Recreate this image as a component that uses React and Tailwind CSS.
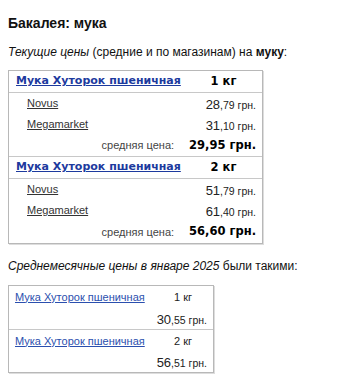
import React from "react";

function Price({ a, b }) {
  return (
    <span className="text-[#222] font-['Liberation_Sans',Arial,sans-serif]">
      <span className="text-[13px]">{a}</span>
      <span className="text-[10.5px]">{b}</span>
    </span>
  );
}

function Group({ weight, rows, avg, last }) {
  return (
    <div>
      <div className="flex h-[22px] items-center border-b border-[#c8c8c8]">
        <a href="#" className="pl-[7px] w-[176px] whitespace-nowrap text-[11px] font-bold text-[#1d3a9e] underline font-['DejaVu_Sans',Verdana,sans-serif]">
          Мука Хуторок пшеничная
        </a>
        <span className="flex-1 text-center text-[11.5px] font-bold text-black font-['DejaVu_Sans',Verdana,sans-serif]">
          {weight}
        </span>
      </div>
      {rows.map((r) => (
        <div key={r[0]} className="flex h-[21px] items-center justify-between pl-[18px] pr-[6px]">
          <a href="#" className="text-[11px] text-[#333] underline">{r[0]}</a>
          <Price a={r[1]} b={r[2]} />
        </div>
      ))}
      <div className={"flex h-[22px] items-center justify-end pr-[6px] " + (last ? "" : "border-b border-[#c8c8c8]")}>
        <span className="text-[11px] text-[#444] mr-[15px]">средняя цена:</span>
        <span className="text-[11.5px] font-bold text-black font-['DejaVu_Sans',Verdana,sans-serif]">{avg}</span>
      </div>
    </div>
  );
}

function Group2({ weight, price, last }) {
  return (
    <div className={last ? "" : "border-b border-[#c8c8c8]"}>
      <div className="flex h-[22px] items-center">
        <a href="#" className="pl-[6px] w-[144px] whitespace-nowrap text-[11px] text-[#2b4fae] underline">
          Мука Хуторок пшеничная
        </a>
        <span className="flex-1 text-center text-[11px] text-[#222]">{weight}</span>
      </div>
      <div className={"flex items-center justify-end pr-[6px] " + (last ? "h-[20px]" : "h-[21px]")}>
        <Price a={price[0]} b={price[1]} />
      </div>
    </div>
  );
}

export default function App() {
  return (
    <div className="bg-white w-[360px] h-[384px] px-[8px] pt-[15px] font-['Liberation_Sans',Arial,sans-serif]">
      <h1 className="text-[14px] font-bold text-[#111] leading-[16px]">Бакалея: мука</h1>
      <p className="mt-[13px] text-[12px] text-[#111] leading-[16px]">
        <i>Текущие цены</i> (средние и по магазинам) на <b>муку</b>:
      </p>
      <div className="mt-[10px] w-[255px] border border-[#b8b8b8] shadow-[1px_1px_0_#ddd]">
        <Group weight="1 кг" rows={[["Novus", "28", ",79 грн."], ["Megamarket", "31", ",10 грн."]]} avg="29,95 грн." />
        <Group weight="2 кг" rows={[["Novus", "51", ",79 грн."], ["Megamarket", "61", ",40 грн."]]} avg="56,60 грн." last />
      </div>
      <p className="mt-[14px] text-[12px] text-[#111] leading-[16px]">
        <i>Среднемесячные цены в январе 2025</i> были такими:
      </p>
      <div className="mt-[11px] w-[206px] border border-[#b8b8b8] shadow-[1px_1px_0_#ddd]">
        <Group2 weight="1 кг" price={["30", ",55 грн."]} />
        <Group2 weight="2 кг" price={["56", ",51 грн."]} last />
      </div>
    </div>
  );
}
